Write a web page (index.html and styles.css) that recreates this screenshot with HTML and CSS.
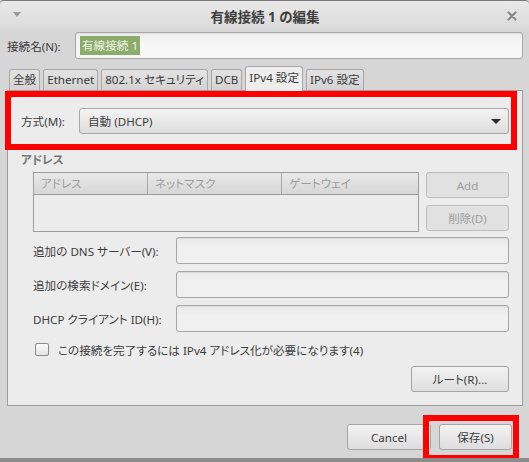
FILE: index.html
```html
<!DOCTYPE html>
<html lang="ja">
<head>
    <meta charset="UTF-8">
    <title>有線接続 1 の編集</title>
    <link rel="stylesheet" href="styles.css">
</head>
<body>
    <div class="window">
        <header class="titlebar">
            <span class="menu-arrow"></span>
            <span class="title">有線接続 1 の編集</span>
            <svg class="close" width="10" height="10" viewBox="0 0 10 10">
                <path d="M1.5 1.5 L8.5 8.5 M8.5 1.5 L1.5 8.5" stroke="#8a8a8a" stroke-width="2.2" stroke-linecap="round"/>
            </svg>
        </header>

        <div class="dialog-body">
            <div class="name-row">
                <label class="name-label">接続名(N):</label>
                <div class="entry name-entry"><span class="selection">有線接続 1</span></div>
            </div>

            <div class="tabs">
                <div class="tab">全般</div>
                <div class="tab">Ethernet</div>
                <div class="tab">802.1x セキュリティ</div>
                <div class="tab">DCB</div>
                <div class="tab active">IPv4 設定</div>
                <div class="tab">IPv6 設定</div>
            </div>

            <div class="notebook">
                <div class="method-row">
                    <label class="method-label">方式(M):</label>
                    <div class="combo">
                        <span>自動 (DHCP)</span>
                        <span class="combo-arrow"></span>
                    </div>
                </div>

                <div class="section-title">アドレス</div>
                <div class="address-box">
                    <div class="address-table">
                        <div class="table-head">
                            <span>アドレス</span>
                            <span>ネットマスク</span>
                            <span>ゲートウェイ</span>
                        </div>
                    </div>
                    <div class="address-buttons">
                        <button class="button" disabled>Add</button>
                        <button class="button" disabled>削除(D)</button>
                    </div>
                </div>

                <div class="fields">
                    <label>追加の DNS サーバー(V):</label>
                    <div class="entry"></div>
                    <label>追加の検索ドメイン(E):</label>
                    <div class="entry"></div>
                    <label>DHCP クライアント ID(H):</label>
                    <div class="entry"></div>
                </div>

                <div class="check-row">
                    <span class="checkbox"></span>
                    <span>この接続を完了するには IPv4 アドレス化が必要になります(4)</span>
                </div>

                <div class="route-row">
                    <button class="button route-button">ルート(R)...</button>
                </div>
            </div>

            <div class="actions">
                <button class="button cancel-button">Cancel</button>
                <button class="button save-button">保存(S)</button>
            </div>
        </div>

        <!-- 赤枠の強調 -->
        <div class="mark mark-method"></div>
        <div class="mark mark-save"></div>
    </div>
</body>
</html>
```

FILE: styles.css
```css
body {
    margin: 0;
    font-family: "Noto Sans", "Noto Sans CJK JP", sans-serif;
    font-size: 11.6px;
    font-feature-settings: "palt";
    color: #3c3c3c;
    background: #d6d6d6;
}
.window {
    position: relative;
    width: 529px;
    height: 462px;
    box-sizing: border-box;
    background: #d6d6d6;
    border-bottom: 4px solid #8c8c8c;
    overflow: hidden;
}
.titlebar {
    height: 30px;
    box-sizing: border-box;
    display: grid;
    grid-template-columns: 1fr auto 1fr;
    align-items: center;
    padding: 0 12px 0 13px;
    border-top: 1px solid #7a7a7a;
    border-radius: 4px 4px 0 0;
    background: linear-gradient(#e9e9e9, #dadada);
}
.menu-arrow {
    width: 0;
    height: 0;
    border-left: 4px solid transparent;
    border-right: 4px solid transparent;
    border-top: 5px solid #9a9a9a;
    margin-top: -2px;
}
.title {
    font-size: 13.5px;
    font-weight: bold;
    color: #3d3d3d;
}
.close {
    justify-self: end;
}
.dialog-body {
    padding: 2px 6px 0 7px;
}
.name-row {
    display: flex;
    align-items: center;
}
.name-label {
    width: 68px;
}
.entry {
    height: 27px;
    box-sizing: border-box;
    border: 1px solid #a7a7a7;
    border-radius: 3px;
    background: linear-gradient(#e8e8e8, #f0f0f0 35%, #f0f0f0);
    box-shadow: inset 0 1px 1px rgba(0, 0, 0, 0.06);
}
.name-entry {
    flex: 1;
    display: flex;
    align-items: center;
    padding-left: 4px;
    background: linear-gradient(#ececec, #f6f6f6 35%, #f6f6f6);
}
.selection {
    background: #8cac6b;
    color: #eef3e6;
    padding: 1px 2px;
    line-height: 17px;
}
.tabs {
    display: flex;
    align-items: flex-end;
    gap: 3px;
    margin-top: 7px;
    padding-left: 2px;
    height: 24px;
}
.tab {
    height: 21px;
    box-sizing: border-box;
    padding: 0 3px;
    line-height: 20px;
    border: 1px solid #a8a8a8;
    border-bottom: none;
    border-radius: 3px 3px 0 0;
    background: linear-gradient(#e3e3e3, #d3d3d3);
    color: #3a3a3a;
}
.tab.active {
    height: 25px;
    margin-bottom: -1px;
    line-height: 22px;
    background: #eeeeee;
    position: relative;
}
.notebook {
    height: 316px;
    box-sizing: border-box;
    padding: 17px 13px 0 13px;
    border: 1px solid #9d9d9d;
    background: #ececec;
}
.method-row {
    display: flex;
    align-items: center;
}
.method-label {
    width: 58px;
}
.combo {
    flex: 1;
    height: 26px;
    box-sizing: border-box;
    display: flex;
    align-items: center;
    justify-content: space-between;
    padding: 0 7px 0 8px;
    border: 1px solid #a8a8a8;
    border-radius: 3px;
    background: linear-gradient(#f4f4f4, #dddddd);
}
.combo-arrow {
    width: 0;
    height: 0;
    border-left: 5px solid transparent;
    border-right: 5px solid transparent;
    border-top: 5px solid #2b2b2b;
}
.section-title {
    margin-top: 18px;
    font-weight: bold;
    color: #777777;
    line-height: 16px;
}
.address-box {
    display: flex;
    gap: 7px;
    margin: 4px 0 0 12px;
}
.address-table {
    flex: 1;
    height: 60px;
    box-sizing: border-box;
    border: 1px solid #9c9c9c;
    background: #ececec;
}
.table-head {
    display: grid;
    grid-template-columns: 114px 134px 1fr;
    height: 21px;
    border-bottom: 1px solid #9c9c9c;
    background: linear-gradient(#e9e9e9, #d6d6d6);
}
.table-head span {
    padding-left: 7px;
    line-height: 21px;
    color: #9c9c9c;
    border-right: 1px solid #a9a9a9;
}
.table-head span:last-child {
    border-right: none;
}
.address-buttons {
    width: 83px;
    display: flex;
    flex-direction: column;
    gap: 7px;
}
.button {
    height: 26px;
    box-sizing: border-box;
    font-family: inherit;
    font-size: 11.6px;
    font-feature-settings: "palt";
    color: #3c3c3c;
    border: 1px solid #a5a5a5;
    border-radius: 3px;
    background: linear-gradient(#f3f3f3, #dddddd);
    padding: 0;
}
.button:disabled {
    color: #9d9d9d;
    border-color: #bdbdbd;
    background: #e1e1e1;
}
.fields {
    display: grid;
    grid-template-columns: 143px 1fr;
    row-gap: 7px;
    align-items: center;
    margin: 5px 0 0 12px;
}
.check-row {
    display: flex;
    align-items: center;
    gap: 9px;
    margin: 11px 0 0 14px;
    height: 13px;
}
.checkbox {
    width: 14px;
    height: 13px;
    box-sizing: border-box;
    border: 1px solid #8a8a8a;
    border-radius: 2px;
    background: linear-gradient(#fbfbfb, #e4e4e4);
}
.route-row {
    display: flex;
    justify-content: flex-end;
    margin-top: 10px;
}
.route-button {
    width: 98px;
}
.actions {
    display: flex;
    justify-content: flex-end;
    gap: 8px;
    margin-top: 18px;
    padding-right: 11px;
}
.cancel-button {
    width: 84px;
}
.save-button {
    width: 73px;
}
.mark {
    position: absolute;
    box-sizing: border-box;
    border: 6px solid #ff0000;
}
.mark-method {
    left: 5px;
    top: 91px;
    width: 512px;
    height: 59px;
}
.mark-save {
    left: 423px;
    top: 415px;
    width: 96px;
    height: 46px;
}
```
